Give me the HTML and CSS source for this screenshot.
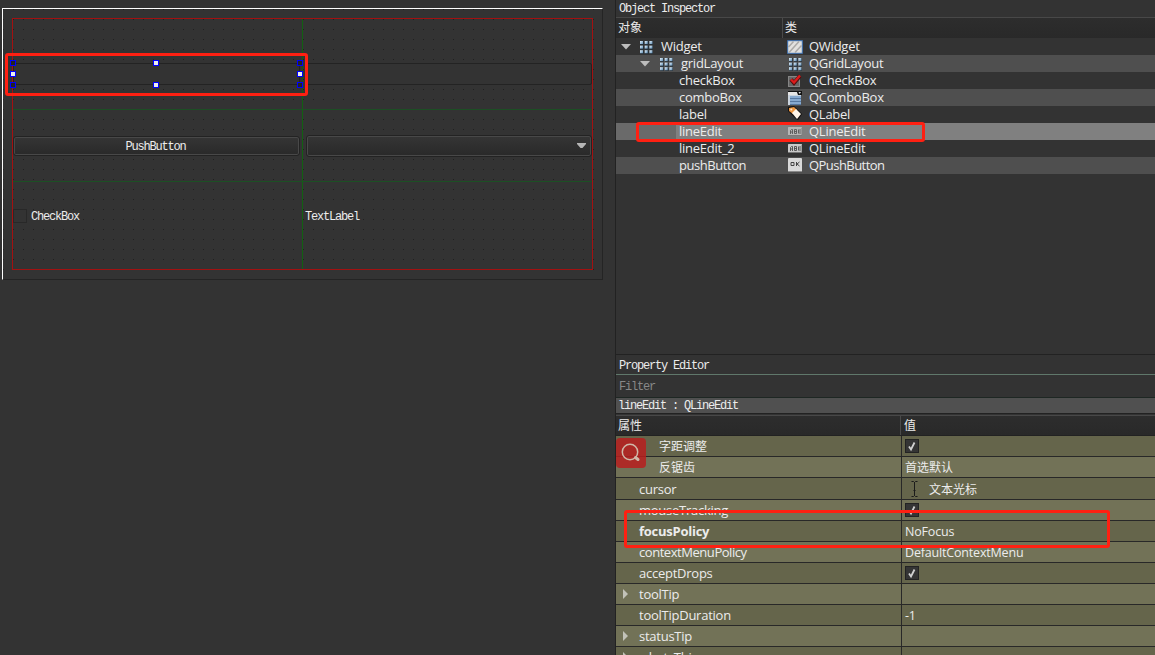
FILE: index.html
```
<!DOCTYPE html>
<html lang="zh">
<head>
<meta charset="utf-8">
<title>Qt Designer</title>
<link rel="stylesheet" href="styles.css">
</head>
<body>
<svg class="defs" width="0" height="0">
  <defs>
    <linearGradient id="dot" x1="0" y1="0" x2="1" y2="1"><stop offset="0" stop-color="#e4f2fb"/><stop offset="1" stop-color="#5f8db5"/></linearGradient>
    <symbol id="grid" viewBox="0 0 14 14"><g fill="#1f2e3a"><path d="M1 1h4v4H1zM6 1h4v4H6zM11 1h3v4h-3zM1 6h4v4H1zM6 6h4v4H6zM11 6h3v4h-3zM1 11h4v3H1zM6 11h4v3H6zM11 11h3v3h-3z" opacity=".6"/></g>
      <g fill="url(#dot)"><rect x="1" y="1" width="3" height="3"/><rect x="5.7" y="1" width="3" height="3"/><rect x="10.4" y="1" width="3" height="3"/><rect x="1" y="5.6" width="3" height="3"/><rect x="5.7" y="5.6" width="3" height="3"/><rect x="10.4" y="5.6" width="3" height="3"/><rect x="1" y="10.2" width="3" height="3"/><rect x="5.7" y="10.2" width="3" height="3"/><rect x="10.4" y="10.2" width="3" height="3"/></g></symbol>
    <symbol id="abi" viewBox="0 0 14 9"><rect width="14" height="9" rx=".5" fill="#c9c9c9"/><path d="M0 8.5h14V1" stroke="#777" fill="none"/><path d="M2.500 7V3.500l1-1h1V7M2.500 5h2M6.500 2.500V6.500H8.500V2.500H6.500M6.500 4.500H8.500M10.500 2.500v4M12 2v5" stroke="#3c3c3c" stroke-width=".8" fill="none"/></symbol>
    <symbol id="tick" viewBox="0 0 14 14"><rect x=".5" y=".5" width="13" height="13" fill="#353535" stroke="#232323"/><path d="M4 7.500l2 3L9.500 3.500" stroke="#d0d0d0" stroke-width="1.800" fill="none"/></symbol>
  </defs>
</svg>
<main class="app">
  <section class="workspace">
    <div class="form">
      <div class="layout">
        <div class="cell edit-cell"><div class="line-edit"></div></div>
        <div class="cell edit-cell second"><div class="line-edit"></div></div>
        <div class="cell middle"><div class="push-button">PushButton</div></div>
        <div class="cell middle second"><div class="combo-box"><svg width="9" height="5"><path d="M0 0h9v1L5.500 5h-2L0 1z" fill="#b5b5b5"/></svg></div></div>
        <div class="cell last"><span class="check"></span><span class="check-text">CheckBox</span></div>
        <div class="cell last second"><span class="label-text">TextLabel</span></div>
      </div>
    </div>
    <div class="selection">
      <i class="handle corner"></i><i class="handle"></i><i class="handle corner"></i>
      <i class="handle"></i><b></b><i class="handle"></i>
      <i class="handle corner"></i><i class="handle"></i><i class="handle corner"></i>
    </div>
    <div class="mark mark-edit"></div>
  </section>

  <aside class="side">
    <section class="inspector">
      <div class="dock-title">Object Inspector</div>
      <div class="head tree-head"><span>对象</span><span>类</span></div>
      <div class="tree">
        <div class="row"><div class="obj lv0"><svg class="arrow" width="10" height="6"><path d="M0 0h10L5 5.500z"/></svg><svg class="ico" width="14" height="14"><use href="#grid"/></svg><span>Widget</span></div><div class="cls"><svg width="16" height="14" viewBox="0 0 16 14"><rect x=".7" y=".7" width="14.600" height="12.600" fill="#e2e1df" stroke="#3e72b5"/><path d="M1.500 7l5-5.500M2 12.500L12 1.500M8 12.500l6.500-7" stroke="#aaa9a7" stroke-width="1.500"/></svg><span>QWidget</span></div></div>
        <div class="row alt"><div class="obj lv1"><svg class="arrow" width="10" height="6"><path d="M0 0h10L5 5.500z"/></svg><svg class="ico" width="14" height="14"><use href="#grid"/></svg><span>gridLayout</span></div><div class="cls"><svg width="16" height="14" viewBox="-1 0 16 14"><use href="#grid" width="14" height="14"/></svg><span>QGridLayout</span></div></div>
        <div class="row"><div class="obj lv2"><span>checkBox</span></div><div class="cls"><svg width="16" height="14" viewBox="0 0 16 14"><rect x="1.500" y="2.500" width="11" height="10" fill="#666" stroke="#858585"/><path d="M4 5.500l3 3.500L13 2" stroke="#501010" stroke-width="4" fill="none"/><path d="M4 5.500l3 3L13 1.500" stroke="#dd1b1b" stroke-width="2.400" fill="none"/></svg><span>QCheckBox</span></div></div>
        <div class="row alt"><div class="obj lv2"><span>comboBox</span></div><div class="cls"><svg width="16" height="15" viewBox="0 0 16 15"><path d="M1 1h14v4H1z" fill="#e5e5e5"/><path d="M1 1h9l1 1H1zM9.500 1H15v4h-4z" fill="#111"/><path d="M11.500 2h2.500l-1.200 2z" fill="#ddd"/><path d="M1 5h13v10H1z" fill="#c9d3de"/><path d="M3 6h11v9H3z" fill="#86a9cf"/><path d="M3 8.500h11M3 11.500h11M3 14.500h11" stroke="#56779f"/></svg><span>QComboBox</span></div></div>
        <div class="row"><div class="obj lv2"><span>label</span></div><div class="cls"><svg class="up" width="16" height="15" viewBox="0 0 16 15"><path d="M1 1l6-1 8 8-4 6-2-1-8-8z" fill="#111"/><path d="M2 2l5-1 3 3-4 4-4-3z" fill="#ee963f"/><path d="M5 7l4-4 5 5-4 5z" fill="#fff5e8"/><circle cx="4.300" cy="3.600" r="1" fill="#fbe5cb"/></svg><span>QLabel</span></div></div>
        <div class="row selected"><div class="obj lv2"><span>lineEdit</span></div><div class="cls"><svg width="16" height="9" viewBox="-1 0 16 9"><use href="#abi" width="14" height="9" opacity=".75"/></svg><span>QLineEdit</span></div></div>
        <div class="row"><div class="obj lv2"><span>lineEdit_2</span></div><div class="cls"><svg width="16" height="9" viewBox="-1 0 16 9"><use href="#abi" width="14" height="9"/></svg><span>QLineEdit</span></div></div>
        <div class="row alt"><div class="obj lv2"><span class="tight">pushButton</span></div><div class="cls"><svg class="up" width="16" height="14" viewBox="0 0 16 14"><rect x="1" width="14" height="14" rx="1" fill="#d9d9d9"/><path d="M1 13.500h14" stroke="#888"/><path d="M4 4.500h3v3H4zM9.500 4v4M12.500 4L10 6 12.500 8" stroke="#444" fill="none"/></svg><span class="tight">QPushButton</span></div></div>
      </div>
      <div class="mark mark-tree"></div>
    </section>

    <section class="properties">
      <div class="dock-title">Property Editor</div>
      <div class="filter">Filter</div>
      <div class="current">lineEdit : QLineEdit</div>
      <div class="head prop-head"><span>属性</span><span>值</span></div>
      <div class="props">
        <div class="prop"><div class="name deep">字距调整</div><div class="val"><svg width="14" height="14"><use href="#tick"/></svg></div></div>
        <div class="prop"><div class="name deep">反锯齿</div><div class="val cjk"><span>首选默认</span></div></div>
        <div class="prop tall"><div class="name">cursor</div><div class="val cjk"><svg class="beam" width="7" height="16" viewBox="0 0 7 16"><path d="M.5.500h2l1 1 1-1h2M3.500 1v14M.5 15.500h2l1-1 1 1h2M2.500 9.500h2" stroke="#1b1b1b" fill="none"/></svg><span>文本光标</span></div></div>
        <div class="prop"><div class="name">mouseTracking</div><div class="val"><svg width="14" height="14"><use href="#tick"/></svg></div></div>
        <div class="prop"><div class="name bold">focusPolicy</div><div class="val"><span>NoFocus</span></div></div>
        <div class="prop"><div class="name tight">contextMenuPolicy</div><div class="val"><span>DefaultContextMenu</span></div></div>
        <div class="prop"><div class="name">acceptDrops</div><div class="val"><svg width="14" height="14"><use href="#tick"/></svg></div></div>
        <div class="prop"><div class="name more">toolTip</div><div class="val"></div></div>
        <div class="prop"><div class="name">toolTipDuration</div><div class="val"><span>-1</span></div></div>
        <div class="prop"><div class="name more">statusTip</div><div class="val"></div></div>
        <div class="prop"><div class="name more">whatsThis</div><div class="val"></div></div>
      </div>
      <div class="search-badge"><svg width="20" height="20" viewBox="0 0 20 20" fill="none" stroke="#cfb8a8"><circle cx="9" cy="9" r="7.700" stroke-width="1.500"/><path d="M14.500 14.500l2.500 2" stroke-width="3" stroke-linecap="round"/></svg></div>
      <div class="mark mark-focus"></div>
    </section>
  </aside>
</main>
</body>
</html>
```
FILE: styles.css
```
* { box-sizing: border-box; }
body { margin: 0; background: #333; color: #ececec; overflow: hidden; font: 13px/17px "Open Sans", "Noto Sans CJK SC", sans-serif; }
.defs { position: absolute; }
svg { display: block; flex: none; }
.app { display: flex; width: 1155px; height: 655px; overflow: hidden; }
.workspace { position: relative; width: 615px; padding: 8px 0 0 2px; font: 12px/14px "Liberation Mono", monospace; letter-spacing: -1.2px; }

.form { width: 601px; height: 272px; padding: 9px; border: 1px solid #242424; border-top-color: #fff; border-left-color: #fff;
  background: #333 conic-gradient(from 270deg at 1px 1px, #202020 90deg, transparent 0) 0 0 / 10px 10px; }
.layout { display: grid; grid-template-columns: 290px 289px; grid-template-rows: 91px 72px 87px; width: 581px; height: 252px; border: 1px solid #a31111; }
.cell { display: flex; border-right: 1px solid #126012; border-bottom: 1px solid #1c4f24; }
.cell.second { border-right: 0; padding-left: 3px; }
.edit-cell { padding-top: 44px; padding-right: 2px; }
.edit-cell.second { padding-right: 0; }
.line-edit { flex: 1; height: 22px; border: 1px solid #232323; border-radius: 2px; background: #333; }
.middle { align-items: center; padding-right: 2px; }
.middle.second { padding-right: 0; }
.push-button, .combo-box { display: flex; align-items: center; justify-content: center; flex: 1; height: 20px; padding: 2px 2px 0 0; border: 1px solid #232323; border-radius: 3px; box-shadow: inset 0 0 0 1px #484848; background: linear-gradient(#353535, #292929); }
.combo-box { height: 22px; justify-content: flex-end; padding: 0 5px 0 0; }
.cell.last { border-bottom: 0; padding-top: 27px; }
.cell.last.second { padding-left: 2px; }
.check { width: 14px; height: 14px; border: 1px solid #282828; background: #333; }
.check-text { margin-left: 4px; padding-top: 1px; }
.label-text { background: #333; height: 14px; padding-top: 1px; }

.selection { position: absolute; left: 10px; top: 60px; display: grid; grid-template-columns: 143px 144px 6px; grid-template-rows: 11px 11px 6px; }
.handle { width: 6px; height: 6px; border: 1px solid #00f; background: #eee; }
.handle.corner { background: #242424; }
.mark { position: absolute; border: 3px solid #ff2012; border-radius: 3px; }
.mark-edit { left: 5px; top: 53px; width: 303px; height: 43px; }

.side { width: 540px; border-left: 1px solid #222; }
.inspector { position: relative; height: 354px; }
.dock-title, .filter, .current { font: 12px/15px "Liberation Mono", monospace; letter-spacing: -1.2px; }
.dock-title { padding: 2px 3px 0; height: 17px; }
.head { display: grid; height: 21px; border-top: 1px solid #484848; background: linear-gradient(#2d2d2d, #292929); font-size: 12px; line-height: 19px; }
.head span { padding-left: 2px; }
.head span + span { border-left: 1px solid #4a4a4a; }
.tree-head { grid-template-columns: 166px 1fr; }
.row { display: grid; grid-template-columns: 171px 1fr; height: 17px; letter-spacing: -0.25px; }
.row.alt { background: #4f4f4f; }
.row.selected { background: linear-gradient(90deg, #6a6a6a 60px, #808080 60px); }
.obj, .cls { display: flex; align-items: center; }
.cls span { margin-left: 6px; }
.arrow { fill: #bdbdbd; }
.lv0 { padding-left: 5px; }
.lv1 { padding-left: 24px; }
.lv2 { padding-left: 63px; }
.ico { margin: 0 8px 0 8px; }
.lv1 .ico { margin-left: 9px; }
.up { margin-bottom: 2px; }
.row .tight, .name.tight { letter-spacing: -0.45px; }
.row .cls .tight { letter-spacing: -0.55px; }
.mark-tree { left: 20px; top: 122px; width: 289px; height: 20px; }

.properties { position: relative; height: 301px; border-top: 1px solid #222; }
.properties .dock-title { height: 20px; padding-top: 4px; border-bottom: 1px solid #60786b; }
.filter { height: 23px; padding: 5px 3px 0; color: #888; border-bottom: 1px solid #1e2723; }
.current { height: 16px; padding: 2px 2px 0; line-height: 13px; background: #505050; border-bottom: 1px solid #222; }
.prop-head { grid-template-columns: 284px 1fr; margin-top: 1px; border-bottom: 1px solid #222; }
.prop-head span + span { padding-left: 3px; }
.prop { display: grid; grid-template-columns: 286px 1fr; grid-template-rows: 100%; height: 21px; line-height: 20px; background: #65654b; border-bottom: 1px solid #282828; }
.prop:nth-child(even) { background: #727257; }
.prop.tall { height: 22px; }
.prop.tall div { line-height: 22px; }
.name { position: relative; padding-left: 23px; border-right: 1px solid #282828; letter-spacing: -0.25px; }
.name.deep { padding: 1px 0 0 43px; font-size: 12px; letter-spacing: 0; }
.bold { font-weight: 700; }
.more::before { content: ""; position: absolute; left: 7px; top: 5px; border: solid transparent; border-width: 5px 0 5px 5px; border-left-color: #c2c2b8; }
.val { display: flex; align-items: center; padding-left: 3px; font-size: 12.5px; letter-spacing: -0.18px; }
.val span { padding-top: 1px; line-height: 19px; }
.val.cjk { font-size: 12px; letter-spacing: 0; }
.beam { margin: 0 11px 0 6px; }
.search-badge { position: absolute; left: 0; top: 83px; width: 30px; height: 30px; padding: 5px; border-radius: 4px; background: rgba(185, 30, 30, .84); }
.mark-focus { left: 8px; top: 155px; width: 486px; height: 38px; }
```
